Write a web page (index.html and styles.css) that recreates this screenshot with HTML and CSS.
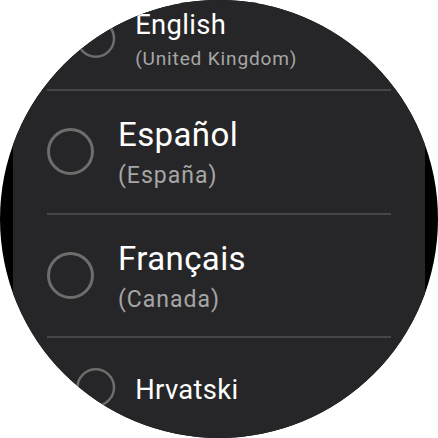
FILE: index.html
```html
<!DOCTYPE html>
<html>
<head>
<meta charset="utf-8">
<link rel="stylesheet" href="styles.css">
</head>
<body>
<div class="watch">
  <div class="screen">
    <div class="list">
      <div class="row row-top">
        <span class="radio"></span>
        <div class="label">
          <div class="title">English</div>
          <div class="sub">(United Kingdom)</div>
        </div>
      </div>
      <div class="divider"></div>
      <div class="row">
        <span class="radio"></span>
        <div class="label">
          <div class="title">Español</div>
          <div class="sub">(España)</div>
        </div>
      </div>
      <div class="divider"></div>
      <div class="row">
        <span class="radio"></span>
        <div class="label">
          <div class="title">Français</div>
          <div class="sub">(Canada)</div>
        </div>
      </div>
      <div class="divider"></div>
      <div class="row row-bottom">
        <span class="radio"></span>
        <div class="label">
          <div class="title">Hrvatski</div>
        </div>
      </div>
    </div>
  </div>
</div>
</body>
</html>
```

FILE: styles.css
```css
html, body {
  margin: 0;
  padding: 0;
  background: #ffffff;
}
.watch {
  width: 438px;
  height: 438px;
  border-radius: 50%;
  overflow: hidden;
  background: #000000;
}
.screen {
  margin: 0 13px;
  height: 438px;
  background: #262628;
  overflow: hidden;
  font-family: Roboto, "Noto Sans", sans-serif;
}
.list {
  display: flex;
  flex-direction: column;
  margin-top: -32.5px;
}
.row {
  height: 121.5px;
  flex: none;
  display: flex;
  align-items: center;
  gap: 24px;
  padding-left: 34px;
  box-sizing: border-box;
}
.row-top {
  transform: translateY(10px) scale(0.83);
}
.row-bottom {
  transform: translateY(-11px) scale(0.83);
}
.radio {
  width: 47px;
  height: 47px;
  box-sizing: border-box;
  border: 3px solid #6d6d6d;
  border-radius: 50%;
  flex: none;
}
.label {
  display: flex;
  flex-direction: column;
  margin-top: 4px;
}
.title {
  color: #ffffff;
  font-size: 33px;
  line-height: 36px;
  letter-spacing: 0.4px;
}
.sub {
  color: #a6a6a6;
  font-size: 23px;
  line-height: 28px;
  margin-top: 9px;
  letter-spacing: 1px;
}
.divider {
  height: 2px;
  flex: none;
  margin: 0 34px;
  background: #45454a;
}
```
